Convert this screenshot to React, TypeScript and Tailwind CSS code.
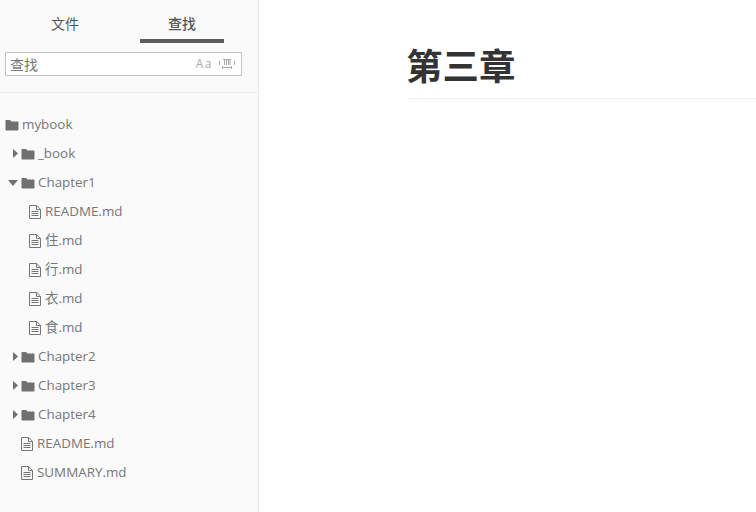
const font = "font-['Open_Sans','Noto_Sans_CJK_SC',sans-serif]";

function Folder() {
  return (
    <svg width="14" height="12" viewBox="0 0 14 12" className="shrink-0">
      <path
        d="M1.5 1h3.6l1.3 1.5h6.1c.6 0 1 .4 1 1v6.9c0 .6-.4 1-1 1h-11c-.6 0-1-.4-1-1V2c0-.6.4-1 1-1z"
        fill="#707070"
      />
    </svg>
  );
}

function FileIcon() {
  return (
    <svg width="12" height="14" viewBox="0 0 12 14" className="shrink-0" fill="none" stroke="#757575">
      <path d="M.5.5h7.2l3.8 3.8v9.2H.5z" />
      <path d="M7.5.5v4h4M2.5 6.5h7M2.5 8.5h7M2.5 10.5h7" />
    </svg>
  );
}

function Caret({ open }: { open?: boolean }) {
  if (open) {
    return (
      <svg width="10" height="6" viewBox="0 0 10 6" className="shrink-0">
        <path d="M0 0h10L5 6z" fill="#707070" />
      </svg>
    );
  }
  return (
    <svg width="5" height="9" viewBox="0 0 5 9" className="shrink-0">
      <path d="M0 0l5 4.5L0 9z" fill="#707070" />
    </svg>
  );
}

function FolderRow({ name, open, root }: { name: string; open?: boolean; root?: boolean }) {
  return (
    <div className="flex h-[29px] items-center">
      <div className={root ? "flex w-[5px]" : "ml-[8px] flex w-[13px] justify-end pr-[3px]"}>
        {!root && <Caret open={open} />}
      </div>
      <Folder />
      <span className="ml-[3px]">{name}</span>
    </div>
  );
}

function FileRow({ name, deep }: { name: string; deep?: boolean }) {
  return (
    <div className={deep ? "flex h-[29px] items-center pl-[29px]" : "flex h-[29px] items-center pl-[21px]"}>
      <FileIcon />
      <span className="ml-[4px]">{name}</span>
    </div>
  );
}

export default function App() {
  return (
    <div className={`flex h-[512px] w-[756px] overflow-hidden bg-white ${font}`}>
      <aside className="h-full w-[259px] shrink-0 border-r border-[#e8e8e8] bg-[#fafafa]">
        {/* tabs */}
        <div className="flex h-[43px] text-[14px] text-[#555]">
          <div className="ml-[23px] flex h-full w-[84px] justify-center pt-[13px]">文件</div>
          <div className="ml-[33px] flex h-full w-[84px] justify-center border-b-4 border-[#5c5c5c] pt-[13px] font-medium">
            查找
          </div>
        </div>

        {/* search box */}
        <div className="mt-[9px] px-[5px]">
          <div className="flex h-[24px] w-[237px] items-center border border-[#c4c4c4] bg-white pl-[4px] pr-[6px]">
            <span className="text-[14px] text-[#777]">查找</span>
            <span className="ml-auto text-[12px] tracking-[1.5px] text-[#aaa]">Aa</span>
            <svg width="16" height="10" viewBox="0 0 16 10" className="ml-[6px]" fill="none" stroke="#aaa">
              <path d="M.5 2v4M15.5 2v4M3 8.5h10M3.5 7v3M12.5 7v3" />
              <path d="M4 .5h8M5.5 1v5M7.5 1v5M9.5 1v5M11 1v5" />
            </svg>
          </div>
        </div>

        <div className="mt-[16px] h-px bg-[#ececec]" />

        {/* tree */}
        <div className="mt-[17px] text-[13.4px] leading-[29px] text-[#777]">
          <FolderRow name="mybook" root />
          <FolderRow name="_book" />
          <FolderRow name="Chapter1" open />
          <FileRow name="README.md" deep />
          <FileRow name="住.md" deep />
          <FileRow name="行.md" deep />
          <FileRow name="衣.md" deep />
          <FileRow name="食.md" deep />
          <FolderRow name="Chapter2" />
          <FolderRow name="Chapter3" />
          <FolderRow name="Chapter4" />
          <FileRow name="README.md" />
          <FileRow name="SUMMARY.md" />
        </div>
      </aside>

      <main className="min-w-0 flex-1 pl-[149px] pt-[40px]">
        <h1 className="h-[59px] border-b border-[#eeeeee] text-[36.5px] leading-[52px] font-bold text-[#333]">
          <span className="-ml-[2px] inline-block">第三章</span>
        </h1>
      </main>
    </div>
  );
}
